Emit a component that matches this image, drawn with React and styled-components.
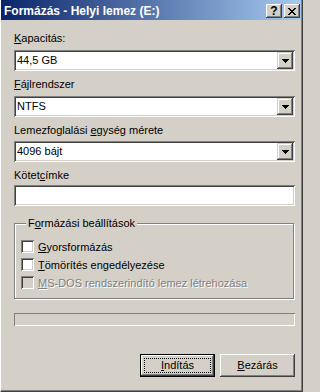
import React from 'react'
import styled, { createGlobalStyle } from 'styled-components'

const Global = createGlobalStyle`
  html, body {
    margin: 0;
    padding: 0;
    background: #d4d0c8;
    overflow: hidden;
  }
`

const Frame = styled.div`
  width: 303px;
  height: 392px;
  box-sizing: border-box;
  background: #d4d0c8;
  border-left: 1px solid #ffffff;
  border-right: 1px solid #404040;
  border-bottom: 1px solid #404040;
  box-shadow: inset -1px -1px #808080;
  display: flex;
  flex-direction: column;
  font-family: "Liberation Sans", Arial, sans-serif;
  font-size: 11px;
  color: #000;
`

const TitleBar = styled.div`
  height: 20px;
  box-sizing: border-box;
  padding: 2px 1px 0 3px;
  margin-right: 1px;
  background: linear-gradient(to right, #0a246a, #a6caf0);
  color: #fff;
  font-weight: bold;
  display: flex;
  align-items: center;
`

const Title = styled.div`
  flex: 1;
  font-size: 12px;
  line-height: 18px;
  white-space: nowrap;
`

const CaptionButton = styled.div`
  width: 16px;
  height: 14px;
  margin-left: 2px;
  background: #d4d0c8;
  box-shadow: inset -1px -1px #404040, inset 1px 1px #ffffff, inset -2px -2px #808080, inset 2px 2px #d4d0c8;
  display: flex;
  align-items: center;
  justify-content: center;
  color: #000;
  font-size: 12px;
  font-weight: bold;
  line-height: 14px;
`

const Client = styled.div`
  flex: 1;
  padding: 12px 7px 0 13px;
  display: flex;
  flex-direction: column;
`

const Field = styled.div`
  display: flex;
  flex-direction: column;
  & + & {
    margin-top: 7px;
  }
`

const Label = styled.div`
  line-height: 13px;
  margin-bottom: ${p => p.$gap || 5}px;
  white-space: nowrap;
`

const Key = styled.u`
  text-decoration: underline;
  text-underline-offset: 1px;
`

const Sunken = styled.div`
  height: 21px;
  box-sizing: border-box;
  padding: 2px;
  background: #ffffff;
  box-shadow: inset 1px 1px #808080, inset -1px -1px #ffffff, inset 2px 2px #404040, inset -2px -2px #d4d0c8;
  display: flex;
  align-items: center;
`

const ComboText = styled.div`
  flex: 1;
  padding-left: 1px;
  line-height: 17px;
`

const DropButton = styled.div`
  width: 16px;
  height: 17px;
  background: #d4d0c8;
  box-shadow: inset -1px -1px #404040, inset 1px 1px #d4d0c8, inset -2px -2px #808080, inset 2px 2px #ffffff;
  display: flex;
  align-items: center;
  justify-content: center;
`

const GroupBox = styled.div`
  margin: 17px 1px 0 0;
  border: 1px solid #808080;
  box-shadow: inset 1px 1px #ffffff, 1px 1px #ffffff;
  padding: 0 6px 9px 6px;
  display: flex;
  flex-direction: column;
`

const Legend = styled.div`
  align-self: flex-start;
  margin: -7px 0 10px 5px;
  padding: 0 2px;
  background: #d4d0c8;
  line-height: 13px;
`

const CheckRow = styled.div`
  display: flex;
  align-items: center;
  height: 13px;
  gap: 4px;
  color: ${p => (p.$disabled ? '#808080' : '#000')};
  text-shadow: ${p => (p.$disabled ? '1px 1px #ffffff' : 'none')};
  & + & {
    margin-top: 5px;
  }
`

const CheckBox = styled.div`
  width: 13px;
  height: 13px;
  flex: none;
  background: ${p => (p.$disabled ? '#d4d0c8' : '#ffffff')};
  box-shadow: inset 1px 1px #808080, inset -1px -1px #ffffff, inset 2px 2px #404040, inset -2px -2px #d4d0c8;
`

const Progress = styled.div`
  margin-top: 14px;
  height: 13px;
  box-shadow: inset 1px 1px #808080, inset -1px -1px #ffffff;
`

const ButtonRow = styled.div`
  margin-top: 28px;
  display: flex;
  justify-content: flex-end;
  gap: 5px;
`

const Button = styled.div`
  position: relative;
  width: 75px;
  height: 23px;
  box-sizing: border-box;
  border: ${p => (p.$default ? '1px solid #000' : 'none')};
  background: #d4d0c8;
  box-shadow: inset -1px -1px #404040, inset 1px 1px #ffffff, inset -2px -2px #808080, inset 2px 2px #d4d0c8;
  display: flex;
  align-items: center;
  justify-content: center;
  line-height: 13px;
  padding-bottom: 1px;
  ${p =>
    p.$default &&
    `
    &::after {
      content: '';
      position: absolute;
      inset: 3px;
      border: 1px dotted #000;
    }
  `}
`

const CloseGlyph = () => (
  <svg width="8" height="7" viewBox="0 0 8 7" shapeRendering="crispEdges">
    <path
      fill="#000"
      d="M0 0h2v1H0zM6 0h2v1H6zM1 1h2v1H1zM5 1h2v1H5zM2 2h4v1H2zM3 3h2v1H3zM2 4h4v1H2zM1 5h2v1H1zM5 5h2v1H5zM0 6h2v1H0zM6 6h2v1H6z"
    />
  </svg>
)

const Arrow = () => (
  <svg width="7" height="4" viewBox="0 0 7 4" shapeRendering="crispEdges">
    <path fill="#000" d="M0 0h7v1H0zM1 1h5v1H1zM2 2h3v1H2zM3 3h1v1H3z" />
  </svg>
)

const Combo = ({ value }) => (
  <Sunken>
    <ComboText>{value}</ComboText>
    <DropButton>
      <Arrow />
    </DropButton>
  </Sunken>
)

const options = [
  { key: 'G', rest: 'yorsformázás' },
  { key: 'T', rest: 'ömörítés engedélyezése' },
  { key: 'M', rest: 'S-DOS rendszerindító lemez létrehozása', disabled: true },
]

const App = () => {
  return (
    <Frame>
      <Global />
      <TitleBar>
        <Title>Formázás - Helyi lemez (E:)</Title>
        <CaptionButton>?</CaptionButton>
        <CaptionButton>
          <CloseGlyph />
        </CaptionButton>
      </TitleBar>
      <Client>
        <Field>
          <Label><Key>K</Key>apacitás:</Label>
          <Combo value="44,5 GB" />
        </Field>
        <Field>
          <Label><Key>F</Key>ájlrendszer</Label>
          <Combo value="NTFS" />
        </Field>
        <Field>
          <Label $gap={4}>Lemezfoglalási <Key>e</Key>gység mérete</Label>
          <Combo value="4096 bájt" />
        </Field>
        <Field>
          <Label $gap={3}>Kötet<Key>c</Key>ímke</Label>
          <Sunken />
        </Field>
        <GroupBox>
          <Legend>F<Key>o</Key>rmázási beállítások</Legend>
          {options.map(o => (
            <CheckRow key={o.key} $disabled={o.disabled}>
              <CheckBox $disabled={o.disabled} />
              <span><Key>{o.key}</Key>{o.rest}</span>
            </CheckRow>
          ))}
        </GroupBox>
        <Progress />
        <ButtonRow>
          <Button $default><span><Key>I</Key>ndítás</span></Button>
          <Button><span><Key>B</Key>ezárás</span></Button>
        </ButtonRow>
      </Client>
    </Frame>
  )
}

export default App
